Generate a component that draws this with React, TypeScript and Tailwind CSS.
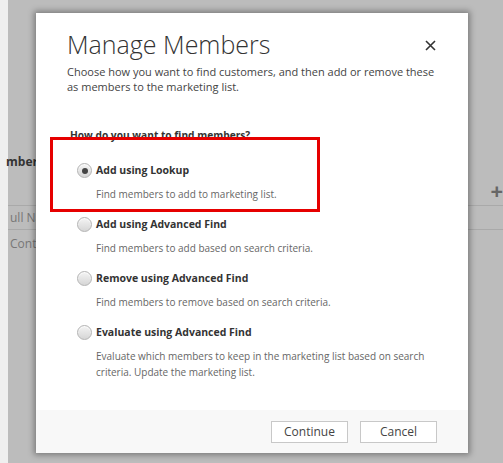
import React from "react";

type Option = {
  label: string;
  desc: string[];
  checked?: boolean;
};

const options: Option[] = [
  { label: "Add using Lookup", desc: ["Find members to add to marketing list."], checked: true },
  { label: "Add using Advanced Find", desc: ["Find members to add based on search criteria."] },
  { label: "Remove using Advanced Find", desc: ["Find members to remove based on search criteria."] },
  {
    label: "Evaluate using Advanced Find",
    desc: ["Evaluate which members to keep in the marketing list based on search", "criteria. Update the marketing list."],
  },
];

function Radio({ checked }: { checked?: boolean }) {
  return (
    <span className="flex h-[15px] w-[15px] shrink-0 items-center justify-center rounded-full border border-[#b4b4b4] bg-gradient-to-b from-[#f4f4f4] to-[#d6d6d6] shadow-[inset_0_1px_1px_rgba(255,255,255,0.8)]">
      {checked && <span className="h-[6px] w-[6px] rounded-full bg-[#444]" />}
    </span>
  );
}

export default function App() {
  return (
    <div
      className="relative h-[463px] w-[503px] overflow-hidden bg-[#bcbcbc]"
      style={{ fontFamily: '"Open Sans", "Noto Sans", sans-serif' }}
    >
      {/* page behind the dialog */}
      <div className="flex h-full">
        <div className="w-[8px] shrink-0 bg-[#efefef]" />
        <div className="flex-1 pt-[152px] text-[12px] text-[#777]">
          <div className="flex h-[20px] items-center justify-between">
            <span className="-ml-[2px] font-bold text-[#333]">mbers</span>
          </div>
          <div className="flex h-[33px] items-center justify-end pt-[2px]">
            <span className="text-[22px] leading-none font-bold text-[#666]">+</span>
          </div>
          <div className="h-px bg-[#a9a9a9]" />
          <div className="flex h-[23px] items-center pl-[2px]">ull Name</div>
          <div className="h-px bg-[#a9a9a9]" />
          <div className="flex h-[27px] items-center pl-[2px]">Contact</div>
        </div>
      </div>

      {/* dialog */}
      <div className="absolute left-[36px] top-[13px] flex h-[440px] w-[432px] flex-col bg-white shadow-[0_0_6px_2px_rgba(0,0,0,0.35)]">
        <div className="flex-1 pl-[31px] pr-[30px] pt-[13px]">
          <div className="flex items-start justify-between">
            <h1 className="text-[25px] leading-[36px] font-light text-[#333]">Manage Members</h1>
            <button className="mt-[14px] mr-[2px] text-[#333]">
              <svg width="11" height="11" viewBox="0 0 11 11">
                <path d="M1 1L10 10M10 1L1 10" stroke="#333" strokeWidth="1.6" />
              </svg>
            </button>
          </div>
          <p className="mt-[2px] whitespace-nowrap text-[11px] leading-[15px] text-[#444]">
            Choose how you want to find customers, and then add or remove these
            <br />
            as members to the marketing list.
          </p>
          <div className="mt-[33px] pl-[3px] text-[10.2px] font-bold leading-[16px] text-[#333]">
            How do you want to find members?
          </div>
          <div className="mt-[19px] flex flex-col pl-[10px]">
            {options.map((o) => (
              <div key={o.label} className="mb-[14px]">
                <div className="flex h-[17px] items-center gap-[4px]">
                  <Radio checked={o.checked} />
                  <span className="text-[10.5px] font-bold text-[#333]">{o.label}</span>
                </div>
                <div className="mt-[7px] pl-[19px] whitespace-nowrap text-[10px] leading-[16px] text-[#666]">
                  {o.desc.map((d) => (
                    <div key={d}>{d}</div>
                  ))}
                </div>
              </div>
            ))}
          </div>
        </div>
        <div className="flex h-[43px] items-center justify-end gap-[12px] bg-[#f8f8f8] pr-[31px]">
          <button className="h-[22px] w-[77px] border border-[#c8c8c8] bg-white text-[12px] text-[#444]">Continue</button>
          <button className="h-[22px] w-[77px] border border-[#c8c8c8] bg-white text-[12px] text-[#444]">Cancel</button>
        </div>
      </div>

      {/* highlight drawn over the screenshot */}
      <div className="absolute left-[50px] top-[137px] h-[75px] w-[270px] border-[3px] border-[#e60000]" />
    </div>
  );
}
